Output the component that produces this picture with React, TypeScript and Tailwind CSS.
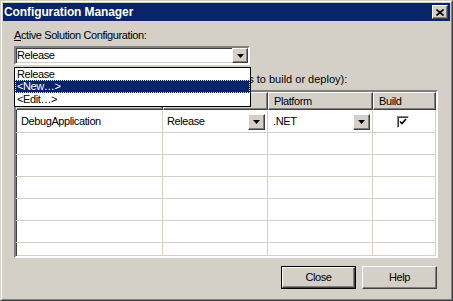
import React from "react";

const font = "font-['Liberation_Sans',Arial,sans-serif]";

// raised 3d edge like a classic win32 button
const raised =
  "border border-t-white border-l-white border-b-[#404040] border-r-[#404040] shadow-[inset_-1px_-1px_#808080,inset_1px_1px_#d4d0c8]";
const sunken =
  "border-2 border-t-[#808080] border-l-[#808080] border-b-white border-r-white shadow-[inset_1px_1px_#404040,inset_-1px_-1px_#d4d0c8]";

function Arrow() {
  return (
    <svg width="7" height="4" viewBox="0 0 7 4">
      <path d="M0 0h7L3.5 4z" fill="#000" />
    </svg>
  );
}

function DropButton({ className = "" }: { className?: string }) {
  return (
    <div className={`flex items-center justify-center bg-[#d4d0c8] ${raised} ${className}`}>
      <Arrow />
    </div>
  );
}

function HeaderCell({ label, w }: { label: string; w: string }) {
  return (
    <div className={`${w} h-[18px] flex items-center pl-[5px] bg-[#d4d0c8] ${raised}`}>
      {label}
    </div>
  );
}

function Row({ children }: { children?: React.ReactNode }) {
  return (
    <div className="flex h-[22px] shrink-0 border-b border-[#d4d0c8]">
      {children ?? (
        <>
          <div className="w-[147px] border-r border-[#d4d0c8]" />
          <div className="w-[105px] border-r border-[#d4d0c8]" />
          <div className="w-[105px] border-r border-[#d4d0c8]" />
          <div className="w-[63px] border-r border-[#d4d0c8]" />
        </>
      )}
    </div>
  );
}

export default function App() {
  return (
    <div className={`${font} w-[453px] h-[301px] bg-[#d4d0c8] text-[11px] tracking-[-0.4px] text-black`}>
      <div className="h-full border border-t-[#d4d0c8] border-l-[#d4d0c8] border-b-[#404040] border-r-[#404040]">
        <div className="h-full border border-t-white border-l-white border-b-[#808080] border-r-[#808080] p-px flex flex-col">
          {/* title bar */}
          <div className="h-[18px] bg-[#0a246a] flex items-center justify-between pl-[1px] pr-[2px]">
            <span className="text-white font-bold text-[12px] tracking-[-0.1px]">Configuration Manager</span>
            <div className={`w-[16px] h-[14px] bg-[#d4d0c8] flex items-center justify-center ${raised}`}>
              <svg width="8" height="7" viewBox="0 0 8 7">
                <path d="M0.5 0.5l7 6M7.5 0.5l-7 6" stroke="#000" strokeWidth="1.6" />
              </svg>
            </div>
          </div>

          <div className="relative flex-1 pl-[11px] pr-[12px] flex flex-col">
            <div className="mt-[8px] h-[13px] leading-[13px]">
              <span className="underline">A</span>ctive Solution Configuration:
            </div>

            <div className={`mt-[4px] w-[236px] h-[19px] bg-white flex items-center ${sunken}`}>
              <span className="flex-1 pl-[1px]">Release</span>
              <DropButton className="w-[16px] h-[15px]" />
            </div>

            <div className="mt-[8px] h-[13px] leading-[13px] tracking-normal">
              Project contexts (check the project configurations to build or deploy):
            </div>

            {/* grid */}
            <div className={`mt-[4px] h-[168px] w-[424px] bg-white overflow-hidden flex flex-col ${sunken}`}>
              <div className="flex shrink-0 mb-px">
                <HeaderCell label="Project" w="w-[147px]" />
                <HeaderCell label="Configuration" w="w-[105px]" />
                <HeaderCell label="Platform" w="w-[105px]" />
                <HeaderCell label="Build" w="w-[63px]" />
              </div>
              <Row>
                <div className="w-[147px] border-r border-[#d4d0c8] flex items-center pl-[5px]">DebugApplication</div>
                <div className="w-[105px] border-r border-[#d4d0c8] flex items-center pl-[4px] pr-[2px]">
                  <span className="flex-1">Release</span>
                  <DropButton className="w-[17px] h-[16px]" />
                </div>
                <div className="w-[105px] border-r border-[#d4d0c8] flex items-center pl-[5px] pr-[2px]">
                  <span className="flex-1">.NET</span>
                  <DropButton className="w-[17px] h-[16px]" />
                </div>
                <div className="w-[63px] border-r border-[#d4d0c8] flex items-center justify-center pr-[3px]">
                  <div className="w-[12px] h-[12px] bg-white flex items-center justify-center border border-t-[#808080] border-l-[#808080] border-b-white border-r-white shadow-[inset_1px_1px_#404040]">
                    <svg width="8" height="7" viewBox="0 0 8 7">
                      <path d="M1 3.5l2 2L7 1" stroke="#000" strokeWidth="1.7" fill="none" />
                    </svg>
                  </div>
                </div>
              </Row>
              <Row />
              <Row />
              <Row />
              <Row />
              <Row />
              <Row />
            </div>

            <div className="mt-[8px] flex justify-end gap-[6px] pr-[1px]">
              <button className="w-[75px] h-[23px] bg-[#d4d0c8] border border-black flex items-center justify-center">
                <div className={`w-full h-full flex items-center justify-center ${raised}`}>Close</div>
              </button>
              <button className={`w-[75px] h-[23px] bg-[#d4d0c8] flex items-center justify-center ${raised}`}>Help</button>
            </div>

            {/* open dropdown list */}
            <div className="absolute left-[11px] top-[46px] w-[237px] h-[40px] bg-white border border-black flex flex-col">
              <div className="h-[12px] leading-[12px] pl-[2px]">Release</div>
              <div className="h-[13px] leading-[11px] pl-[1px] bg-[#0a246a] text-white border border-dotted border-[#f0e68c]">
                &lt;New…&gt;
              </div>
              <div className="h-[13px] leading-[13px] pl-[2px]">&lt;Edit…&gt;</div>
            </div>
          </div>
        </div>
      </div>
    </div>
  );
}
